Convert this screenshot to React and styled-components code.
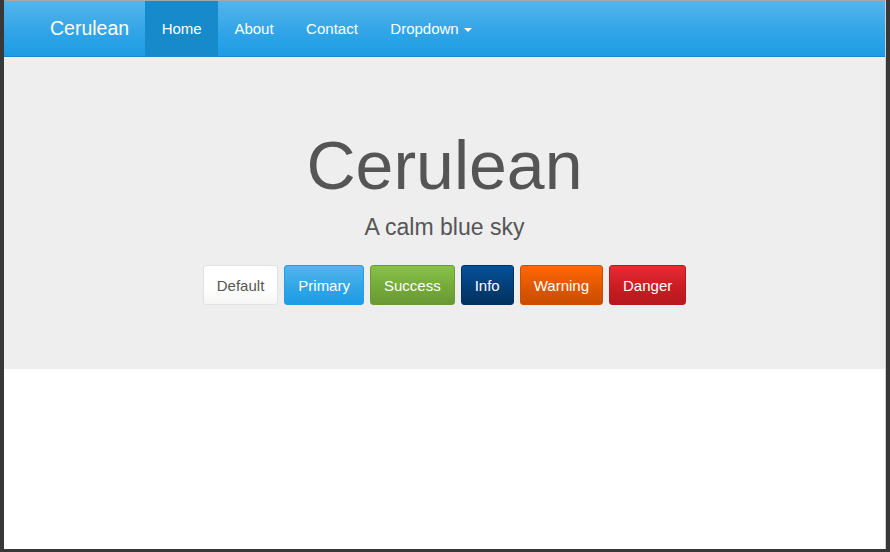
import React from 'react';
import styled, { createGlobalStyle, css } from 'styled-components';

const GlobalStyle = createGlobalStyle`
  html, body {
    margin: 0;
    padding: 0;
    background: #383838;
  }
  body {
    font-family: "Liberation Sans", Arial, sans-serif;
  }
  * {
    box-sizing: border-box;
  }
`;

const Frame = styled.div`
  width: 890px;
  height: 552px;
  background: #383838;
  padding: 0 4px 3px 4px;
  display: flex;
`;

const Page = styled.div`
  flex: 1;
  background: #ffffff;
  border-top: 1px solid #a8a8a8;
  border-right: 1px solid #cfcfcf;
  display: flex;
  flex-direction: column;
`;

const Navbar = styled.nav`
  height: 56px;
  display: flex;
  align-items: stretch;
  padding-left: 30px;
  background-image: linear-gradient(#54b4eb, #2fa4e7 60%, #1d9ce5);
  border-bottom: 1px solid #178acc;
`;

const Brand = styled.a`
  display: flex;
  align-items: center;
  padding: 0 16px;
  font-size: 19.5px;
  color: #ffffff;
  text-decoration: none;
`;

const NavLink = styled.a`
  display: flex;
  align-items: center;
  padding: 0 ${({ active }) => (active ? '16.5px' : '16.25px')};
  font-size: 15px;
  color: #ffffff;
  text-decoration: none;
  background: ${({ active }) => (active ? '#178acc' : 'transparent')};
`;

const Caret = styled.span`
  display: inline-block;
  width: 0;
  height: 0;
  margin-left: 5px;
  margin-top: 2px;
  border-top: 4px solid #ffffff;
  border-left: 4px solid transparent;
  border-right: 4px solid transparent;
`;

const Jumbotron = styled.section`
  background: #eeeeee;
  padding: 71px 0 64px;
  display: flex;
  flex-direction: column;
  align-items: center;
  color: #555555;
`;

const Title = styled.h1`
  margin: 0;
  font-size: 68px;
  line-height: 75px;
  font-weight: normal;
`;

const Subtitle = styled.p`
  margin: 8px 0 0;
  font-size: 23px;
  line-height: 32px;
`;

const ButtonRow = styled.div`
  display: flex;
  gap: 6px;
  margin-top: 22px;
`;

const variants = {
  default: css`
    color: #555555;
    background-image: linear-gradient(#ffffff, #ffffff 60%, #f5f5f5);
    border-color: #e2e2e2;
  `,
  primary: css`
    background-image: linear-gradient(#54b4eb, #2fa4e7 60%, #1d9ce5);
    border-color: #1f9ee5;
  `,
  success: css`
    background-image: linear-gradient(#88c149, #73a839 60%, #699934);
    border-color: #6a9c35;
  `,
  info: css`
    background-image: linear-gradient(#04519b, #033c73 60%, #02325f);
    border-color: #02325f;
  `,
  warning: css`
    background-image: linear-gradient(#ff6707, #dd5600 60%, #c94e00);
    border-color: #cc4f00;
  `,
  danger: css`
    background-image: linear-gradient(#e72b35, #c71c22 60%, #b5191f);
    border-color: #b8191f;
  `,
};

const Button = styled.button`
  font-family: inherit;
  font-size: 15px;
  line-height: 20px;
  padding: 10px 13px 8px;
  border: 1px solid transparent;
  border-radius: 3px;
  color: #ffffff;
  cursor: pointer;
  ${({ variant }) => variants[variant]}
`;

const buttons = [
  ['default', 'Default'],
  ['primary', 'Primary'],
  ['success', 'Success'],
  ['info', 'Info'],
  ['warning', 'Warning'],
  ['danger', 'Danger'],
];

const App = () => {
  return (
    <Frame>
      <GlobalStyle />
      <Page>
        <Navbar>
          <Brand href="#">Cerulean</Brand>
          <NavLink href="#" active>
            Home
          </NavLink>
          <NavLink href="#">About</NavLink>
          <NavLink href="#">Contact</NavLink>
          <NavLink href="#">
            Dropdown
            <Caret />
          </NavLink>
        </Navbar>
        <Jumbotron>
          <Title>Cerulean</Title>
          <Subtitle>A calm blue sky</Subtitle>
          <ButtonRow>
            {buttons.map(([variant, label]) => (
              <Button key={variant} variant={variant}>
                {label}
              </Button>
            ))}
          </ButtonRow>
        </Jumbotron>
      </Page>
    </Frame>
  );
};

export default App;
